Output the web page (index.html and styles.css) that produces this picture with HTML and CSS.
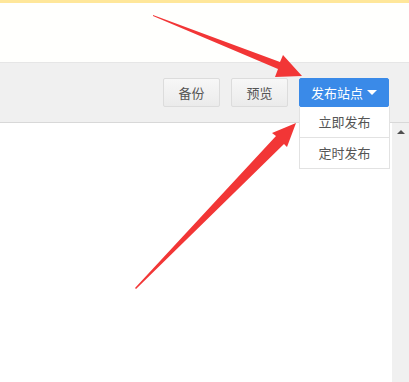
FILE: index.html
```html
<!DOCTYPE html>
<html lang="zh">
<head>
    <meta charset="UTF-8">
    <meta name="viewport" content="width=device-width, initial-scale=1.0">
    <title>发布站点</title>
    <link rel="stylesheet" href="styles.css">
</head>
<body>
    <div class="notice"></div>
    <div class="top"></div>
    <div class="toolbar">
        <button class="btn">备份</button>
        <button class="btn">预览</button>
        <div class="publish">
            <button class="btn btnBlue">发布站点 <span class="caret"></span></button>
            <div class="menu">
                <div class="menuItem">立即发布</div>
                <div class="menuItem">定时发布</div>
            </div>
        </div>
    </div>
    <div class="content">
        <div class="main"></div>
        <div class="scroll">
            <span class="up"></span>
        </div>
    </div>

    <svg class="arrows" width="409" height="382" viewBox="0 0 409 382">
        <polygon points="153,15 280,62 283,55 302,76 275,77 278,69 153,16" />
        <polygon points="135,288 276,136 272,133 296,123 287,147 284,144 136,289" />
    </svg>
</body>
</html>
```

FILE: styles.css
```css
body{
    margin: 0;
    font-family: "Noto Sans CJK SC", "Liberation Sans", sans-serif;
    background: #fff;
    height: 382px;
    overflow: hidden;
    display: flex;
    flex-direction: column;
}
.notice{
    height: 3px;
    background-color: #ffe79a;
}
.top{
    height: 59px;
    background-color: #fffffd;
}
.toolbar{
    height: 59px;
    background-color: #f0f0f0;
    border-top: 1px solid #e6e6e6;
    border-bottom: 1px solid #d8d8d8;
    display: flex;
    justify-content: flex-end;
    align-items: center;
    gap: 11px;
    padding-right: 20px;
}
.btn{
    height: 29px;
    width: 57px;
    font-family: inherit;
    font-size: 13px;
    color: #555;
    background: linear-gradient(#f7f7f7, #ebebeb);
    border: 1px solid #dcdcdc;
    border-radius: 2px;
    padding: 0;
}
.publish{
    position: relative;
}
.btnBlue{
    width: 90px;
    color: #fff;
    background: #3a8ae8;
    border-color: #3a8ae8;
    display: flex;
    align-items: center;
    justify-content: center;
    gap: 4px;
}
.caret{
    width: 0;
    height: 0;
    border-left: 5px solid transparent;
    border-right: 5px solid transparent;
    border-top: 5px solid #fff;
}
.menu{
    position: absolute;
    top: 29px;
    left: 0;
    width: 89px;
    background: #fff;
    border: 1px solid #e2e2e2;
    border-top: none;
    z-index: 2;
}
.menuItem{
    height: 30px;
    line-height: 30px;
    text-align: center;
    font-size: 13px;
    color: #555;
}
.menuItem + .menuItem{
    border-top: 1px solid #e2e2e2;
}
.content{
    flex: 1;
    display: flex;
}
.main{
    flex: 1;
}
.scroll{
    width: 17px;
    background-color: #f0f0f0;
    display: flex;
    justify-content: center;
    padding-top: 7px;
}
.up{
    width: 0;
    height: 0;
    border-left: 4px solid transparent;
    border-right: 4px solid transparent;
    border-bottom: 4px solid #505050;
}
.arrows{
    position: absolute;
    left: 0;
    top: 0;
    pointer-events: none;
    z-index: 3;
}
.arrows polygon{
    fill: #f23636;
}
```
